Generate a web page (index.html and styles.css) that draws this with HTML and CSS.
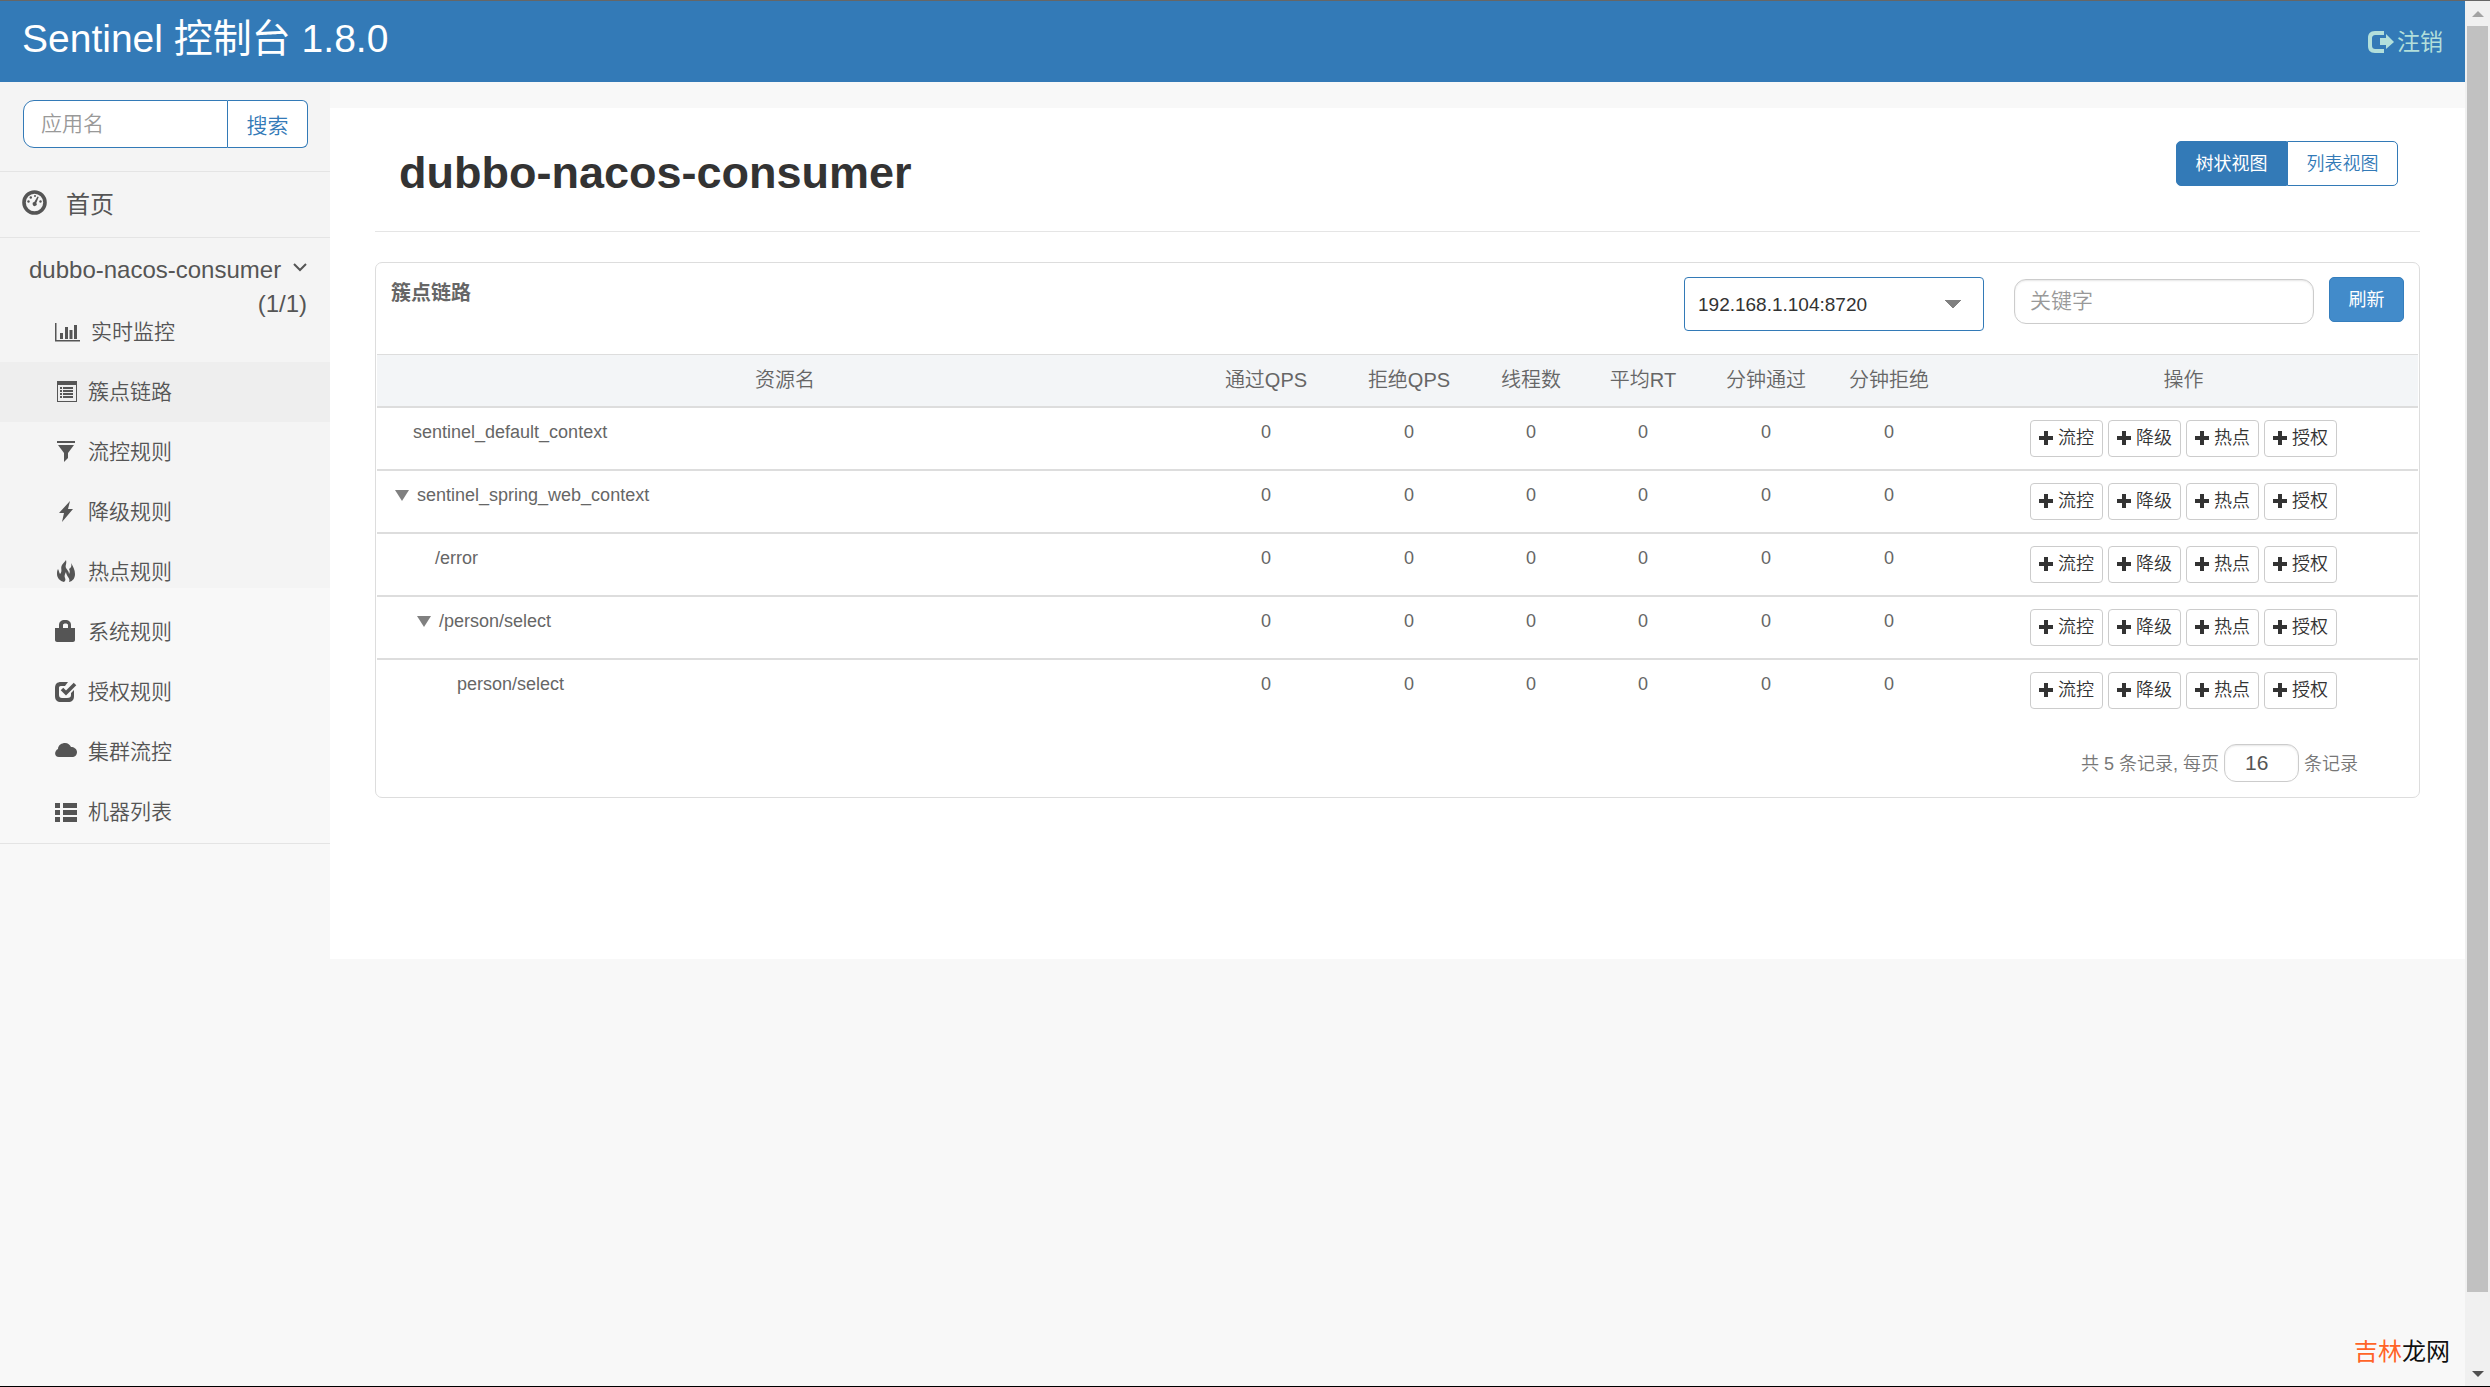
FILE: index.html
```html
<!DOCTYPE html>
<html lang="zh-CN">
<head>
<meta charset="utf-8">
<title>Sentinel 控制台</title>
<link rel="stylesheet" href="styles.css">
</head>
<body>
<svg class="sprite" aria-hidden="true">
  <symbol id="plus" viewBox="0 0 14 14"><path d="M5 0h4v5h5v4H9v5H5V9H0V5h5z"/></symbol>
</svg>
<div class="window">
  <div class="app">
    <header class="topbar">
      <a class="brand" href="#">Sentinel 控制台 1.8.0</a>
      <a class="logout" href="#"><svg class="logout-icon" viewBox="0 0 26 22"><path d="M16 0v4H8C5 4 4 5 4 8v6c0 3 1 4 4 4h8v4H7c-5 0-7-3-7-7V7c0-4 2-7 7-7zM12 7h6V3l8 8-8 7v-4h-6z"/></svg>注销</a>
    </header>
    <div class="body">
      <nav class="sidebar">
        <form class="search">
          <input class="search-input" type="text" placeholder="应用名" aria-label="应用名">
          <button class="search-button" type="button">搜索</button>
        </form>
        <a class="home" href="#"><svg class="home-icon" viewBox="0 0 25 25"><circle cx="12.5" cy="12.5" r="10.5" fill="none" stroke="currentColor" stroke-width="3.6"/><path d="M15.500 6.500l1.200.6-2.400 5.800a2 2 0 1 1-2-.8z"/><circle cx="6.500" cy="11.500" r="1.200"/><circle cx="8.800" cy="7.500" r="1.200"/><circle cx="13" cy="6" r="1"/><circle cx="18.500" cy="11.500" r="1.200"/></svg>首页</a>
        <a class="service" href="#"><span>dubbo-nacos-consumer</span><svg class="chevron" viewBox="0 0 14 9"><path d="M1 1l6 6 6-6" fill="none" stroke="currentColor" stroke-width="2"/></svg><span class="count">(1/1)</span></a>
        <ul class="menu">
          <li><a class="item" href="#"><svg class="icon icon-wide" viewBox="0 0 27 24"><path d="M0 3h1.500v17H25v1.500H0zM5 13h3v6H5zM10 7h3v12h-3zM14.500 10h3v9h-3zM19 5h3v14h-3z"/></svg>实时监控</a></li>
          <li><a class="item active" href="#"><svg class="icon" viewBox="0 0 24 24"><path fill-rule="evenodd" d="M2 1h20v21H2zM3 5v16h18V5zM5 7h2v2H5zM8 7h10v2H8zM5 10h2v2H5zM8 10h10v2H8zM5 13h2v2H5zM8 13h10v2H8zM5 16h2v2H5zM8 16h10v2H8z"/></svg>簇点链路</a></li>
          <li><a class="item" href="#"><svg class="icon" viewBox="0 0 24 24"><path d="M2 1h18v2H2zM3 5h16l-6 8v5l-4 4v-9z"/></svg>流控规则</a></li>
          <li><a class="item" href="#"><svg class="icon" viewBox="0 0 24 24"><path d="M15 1L4 13h5L7 22 18 9h-5z"/></svg>降级规则</a></li>
          <li><a class="item" href="#"><svg class="icon" viewBox="0 0 24 24"><path d="M11 0c1 4-1 5 0 8 1 2 3 3 3 6 1-2 1-3 0-5 2-1 3-3 2-6 2 3 4 7 4 11 0 4-2 7-6 8 1-2 0-4-1-5-1-2-2-3-2-5-1 2-2 4-1 6 1 2 0 3-1 4-4-1-7-4-7-8 0-2 0-3 1-5 1 2 1 3 2 5C8 11 5 8 7 5c1-2 3-3 4-5z"/></svg>热点规则</a></li>
          <li><a class="item" href="#"><svg class="icon" viewBox="0 0 24 24"><path fill-rule="evenodd" d="M0 8h4V5c0-3 2-5 6-5s6 2 6 5v3h4v12c0 1-1 2-2 2H2c-1 0-2-1-2-2zM8 8h5V5c0-2-5-2-5 0z"/></svg>系统规则</a></li>
          <li><a class="item" href="#"><svg class="icon" viewBox="0 0 24 24"><path d="M13 2l-3 4H6C4 6 4 7 4 8v7c0 2 1 3 3 3h5c3 0 4-1 4-3v-2l3-3v6c0 4-2 6-6 6H6c-4 0-6-2-6-6V8c0-4 2-6 6-6z"/><path d="M7 9l4 4 9-9" fill="none" stroke="currentColor" stroke-width="3.600"/></svg>授权规则</a></li>
          <li><a class="item" href="#"><svg class="icon" viewBox="0 0 24 24"><path d="M4 17c-5 0-5-6-1-8 0-4 4-6 7-6 3 0 5 2 6 4 3 0 6 2 6 5s-2 5-5 5z"/></svg>集群流控</a></li>
          <li><a class="item" href="#"><svg class="icon" viewBox="0 0 24 24"><path d="M0 3h5v5H0zM8 3h14v5H8zM0 10h5v5H0zM8 10h14v5H8zM0 17h5v5H0zM8 17h14v5H8z"/></svg>机器列表</a></li>
        </ul>
      </nav>
      <main class="main">
        <div class="page-head">
          <h1 class="page-title">dubbo-nacos-consumer</h1>
          <div class="views"><button class="view view-on" type="button">树状视图</button><button class="view" type="button">列表视图</button></div>
        </div>
        <section class="card">
          <div class="card-head">
            <h2 class="card-title">簇点链路</h2>
            <select class="machine" aria-label="机器"><option>192.168.1.104:8720</option></select>
            <input class="keyword" type="text" placeholder="关键字" aria-label="关键字">
            <button class="refresh" type="button">刷新</button>
          </div>
          <table class="grid">
            <colgroup><col><col class="c-pass"><col class="c-block"><col class="c-thread"><col class="c-rt"><col class="c-mpass"><col class="c-mblock"><col class="c-ops"></colgroup>
            <thead><tr><th>资源名</th><th>通过QPS</th><th>拒绝QPS</th><th>线程数</th><th>平均RT</th><th>分钟通过</th><th>分钟拒绝</th><th>操作</th></tr></thead>
            <tbody>
              <tr><td class="name leaf">sentinel_default_context</td><td>0</td><td>0</td><td>0</td><td>0</td><td>0</td><td>0</td><td class="ops"><div class="actions"><button class="act" type="button"><svg><use href="#plus"/></svg>流控</button><button class="act" type="button"><svg><use href="#plus"/></svg>降级</button><button class="act" type="button"><svg><use href="#plus"/></svg>热点</button><button class="act" type="button"><svg><use href="#plus"/></svg>授权</button></div></td></tr>
              <tr><td class="name parent"><span class="fold"></span>sentinel_spring_web_context</td><td>0</td><td>0</td><td>0</td><td>0</td><td>0</td><td>0</td><td class="ops"><div class="actions"><button class="act" type="button"><svg><use href="#plus"/></svg>流控</button><button class="act" type="button"><svg><use href="#plus"/></svg>降级</button><button class="act" type="button"><svg><use href="#plus"/></svg>热点</button><button class="act" type="button"><svg><use href="#plus"/></svg>授权</button></div></td></tr>
              <tr><td class="name leaf level-1">/error</td><td>0</td><td>0</td><td>0</td><td>0</td><td>0</td><td>0</td><td class="ops"><div class="actions"><button class="act" type="button"><svg><use href="#plus"/></svg>流控</button><button class="act" type="button"><svg><use href="#plus"/></svg>降级</button><button class="act" type="button"><svg><use href="#plus"/></svg>热点</button><button class="act" type="button"><svg><use href="#plus"/></svg>授权</button></div></td></tr>
              <tr><td class="name parent level-1"><span class="fold"></span>/person/select</td><td>0</td><td>0</td><td>0</td><td>0</td><td>0</td><td>0</td><td class="ops"><div class="actions"><button class="act" type="button"><svg><use href="#plus"/></svg>流控</button><button class="act" type="button"><svg><use href="#plus"/></svg>降级</button><button class="act" type="button"><svg><use href="#plus"/></svg>热点</button><button class="act" type="button"><svg><use href="#plus"/></svg>授权</button></div></td></tr>
              <tr><td class="name leaf level-2">person/select</td><td>0</td><td>0</td><td>0</td><td>0</td><td>0</td><td>0</td><td class="ops"><div class="actions"><button class="act" type="button"><svg><use href="#plus"/></svg>流控</button><button class="act" type="button"><svg><use href="#plus"/></svg>降级</button><button class="act" type="button"><svg><use href="#plus"/></svg>热点</button><button class="act" type="button"><svg><use href="#plus"/></svg>授权</button></div></td></tr>
            </tbody>
          </table>
          <div class="pager"><label for="size">共 5 条记录, 每页</label><input class="size" id="size" type="text" value="16"><span>条记录</span></div>
        </section>
      </main>
    </div>
    <div class="watermark"><span class="watermark-hot">吉林</span>龙网</div>
  </div>
  <div class="scroll" aria-hidden="true"><span class="arrow-up"></span><span class="thumb"></span><span class="arrow-down"></span></div>
</div>
</body>
</html>
```
FILE: styles.css
```css
* { box-sizing: border-box; }

body {
  margin: 0;
  background: #f8f8f8;
  color: #666;
  font-family: "Liberation Sans", "Noto Sans CJK SC", sans-serif;
  font-size: 18px;
  font-weight: 350;
}

a { color: inherit; text-decoration: none; }
button, input, select { margin: 0; font: inherit; }
svg { flex: none; fill: currentColor; }
.sprite { display: none; }

.window {
  display: flex;
  min-height: 100vh;
  border-top: 1px solid #666;
  border-bottom: 1px solid #000;
}

.app { position: relative; flex: 1; min-width: 0; }

/* Top bar */
.topbar {
  display: flex;
  align-items: center;
  justify-content: space-between;
  height: 81px;
  padding: 0 22px;
  background: #337ab7;
}
.brand { padding-bottom: 6px; color: #fff; font-size: 39px; line-height: 48px; font-weight: 400; }
.logout { display: flex; align-items: center; gap: 3px; color: #b2dfdb; font-size: 23px; line-height: 32px; font-weight: 400; }
.logout-icon { width: 26px; height: 22px; }

.body { display: flex; align-items: flex-start; }

/* Sidebar */
.sidebar {
  width: 330px;
  flex: none;
  padding-bottom: 1px;
  border-bottom: 1px solid #e4e4e4;
  background: linear-gradient(#f4f4f4 506px, #f8f8f8 506px);
  color: #555;
}
.search { display: flex; height: 90px; padding: 18px 22px 23px; border-bottom: 1px solid #e4e4e4; }
.search-input {
  flex: 1;
  min-width: 0;
  margin-left: 1px;
  padding: 0 17px;
  border: 1px solid #337ab7;
  border-radius: 11px 0 0 11px;
  background: #fff;
  font-size: 21px;
}
.search-input::placeholder, .keyword::placeholder { color: #999; }
.search-button {
  width: 80px;
  padding: 0;
  border: 1px solid #337ab7;
  border-left: 0;
  border-radius: 0 6px 6px 0;
  background: #fff;
  color: #337ab7;
  font-size: 21px;
}
.home {
  display: flex;
  align-items: center;
  gap: 19px;
  height: 66px;
  padding: 0 22px 4px;
  border-bottom: 1px solid #e4e4e4;
  font-size: 24px;
  font-weight: 400;
}
.home-icon { width: 25px; height: 25px; }
.service {
  display: grid;
  grid-template-columns: 1fr 14px;
  align-items: start;
  padding: 15px 23px 0 29px;
  height: 64px;
  font-size: 24px;
  line-height: 34px;
}
.chevron { width: 14px; height: 9px; margin-top: 10px; }
.count { grid-column: 1 / -1; text-align: right; }
.menu { margin: 0; padding: 0; list-style: none; }
.item { display: flex; align-items: center; gap: 9px; height: 60px; padding-left: 55px; font-size: 21px; line-height: 30px; }
.active { background: #eee; }
.icon { width: 24px; height: 24px; }
.icon-wide { width: 27px; }

/* Main */
.main { flex: 1; min-width: 0; min-height: 851px; margin-top: 26px; padding: 0 45px; background: #fff; }
.page-head {
  display: flex;
  align-items: flex-start;
  justify-content: space-between;
  height: 124px;
  padding: 33px 22px 0 24px;
  border-bottom: 1px solid #e5e5e5;
}
.page-title { margin: 0; color: #333; font-size: 45px; line-height: 64px; font-weight: 700; }
.views { display: flex; }
.view {
  width: 111px;
  height: 45px;
  padding: 0 0 3px;
  border: 1px solid #337ab7;
  border-radius: 0 5px 5px 0;
  background: #fff;
  color: #337ab7;
}
.view-on { border-radius: 5px 0 0 5px; background: #337ab7; color: #fff; font-weight: 400; }

.card { margin-top: 30px; padding: 0 1px; border: 1px solid #ddd; border-radius: 7px; }
.card-head { display: flex; align-items: flex-start; height: 91px; padding: 14px 14px 0; }
.card-title { flex: 1; margin: 0; font-size: 20px; line-height: 32px; font-weight: 700; }
.machine {
  width: 300px;
  height: 54px;
  margin-right: 30px;
  padding: 0 13px;
  appearance: none;
  border: 1px solid #337ab7;
  border-radius: 4px;
  background: conic-gradient(from -45deg at 50% 100%, #808080 90deg, transparent 0) 260px 22px / 16px 8px no-repeat #fff;
  color: #333;
  font-size: 19px;
}
.keyword {
  width: 300px;
  height: 45px;
  margin: 2px 15px 0 0;
  padding: 0 15px 2px;
  border: 1px solid #ccc;
  border-radius: 12px;
  background: #fff;
  box-shadow: inset 0 1px 2px rgba(0, 0, 0, .1);
  font-size: 21px;
}
.refresh { width: 75px; height: 45px; padding: 0 0 3px; border: 1px solid #357ebd; border-radius: 5px; background: #428bca; color: #fff; font-weight: 400; }

.grid { width: 100%; table-layout: fixed; border-collapse: separate; border-spacing: 0; }
.c-pass { width: 146px; }
.c-block { width: 140px; }
.c-thread { width: 104px; }
.c-rt, .c-mblock { width: 120px; }
.c-mpass { width: 126px; }
.c-ops { width: 469px; }
.grid th {
  height: 54px;
  padding: 0 0 1px;
  border-top: 1px solid #ddd;
  border-bottom: 2px solid #ddd;
  background: #f3f5f7;
  font-size: 20px;
  line-height: 28px;
  font-weight: 350;
}
.grid td { height: 63px; padding: 11px 0 0; border-bottom: 2px solid #ddd; line-height: 26px; text-align: center; vertical-align: top; }
.grid tbody tr:last-child td { border-bottom: 0; }
.grid .name { text-align: left; }
.grid .leaf { padding-left: 36px; }
.grid .parent { padding-left: 18px; }
.grid .leaf.level-1 { padding-left: 58px; }
.grid .parent.level-1 { padding-left: 40px; }
.grid .leaf.level-2 { padding-left: 80px; }
.fold { display: inline-block; margin-right: 8px; border: 7px solid transparent; border-top: 11px solid #808080; border-bottom: 0; }
.actions { display: flex; justify-content: center; gap: 5px; margin-top: 1px; }
.act {
  display: flex;
  align-items: center;
  justify-content: center;
  gap: 5px;
  width: 73px;
  height: 37px;
  padding: 0 0 2px;
  border: 1px solid #ccc;
  border-radius: 4px;
  background: #fff;
  color: #333;
}
.act svg { width: 14px; height: 14px; }

.pager { display: flex; align-items: center; justify-content: flex-end; gap: 5px; height: 74px; padding: 6px 60px 0 0; color: #777; }
.pager label, .pager span { padding-bottom: 3px; }
.size {
  width: 75px;
  height: 38px;
  padding: 0 20px;
  border: 1px solid #ccc;
  border-radius: 12px;
  background: #fff;
  box-shadow: inset 0 1px 2px rgba(0, 0, 0, .1);
  color: #555;
  font-size: 21px;
}

.watermark {
  position: absolute;
  right: 15px;
  bottom: 16px;
  color: #111;
  font-size: 24px;
  line-height: 36px;
  font-weight: 400;
  text-shadow: 0 0 3px #fff;
}
.watermark-hot { color: #ff6428; }

/* Scroll track */
.scroll {
  display: flex;
  flex: none;
  flex-direction: column;
  align-items: center;
  width: 25px;
  padding: 10px 0 9px;
  background: #f0f0f0;
}
.arrow-up, .arrow-down { border: 6px solid transparent; }
.arrow-up { border-top: 0; border-bottom-color: #a3a3a3; }
.arrow-down { border-bottom: 0; border-top-color: #505050; }
.thumb { flex: 1; width: 21px; margin: 9px 0 79px; background: #c1c1c1; }
```
